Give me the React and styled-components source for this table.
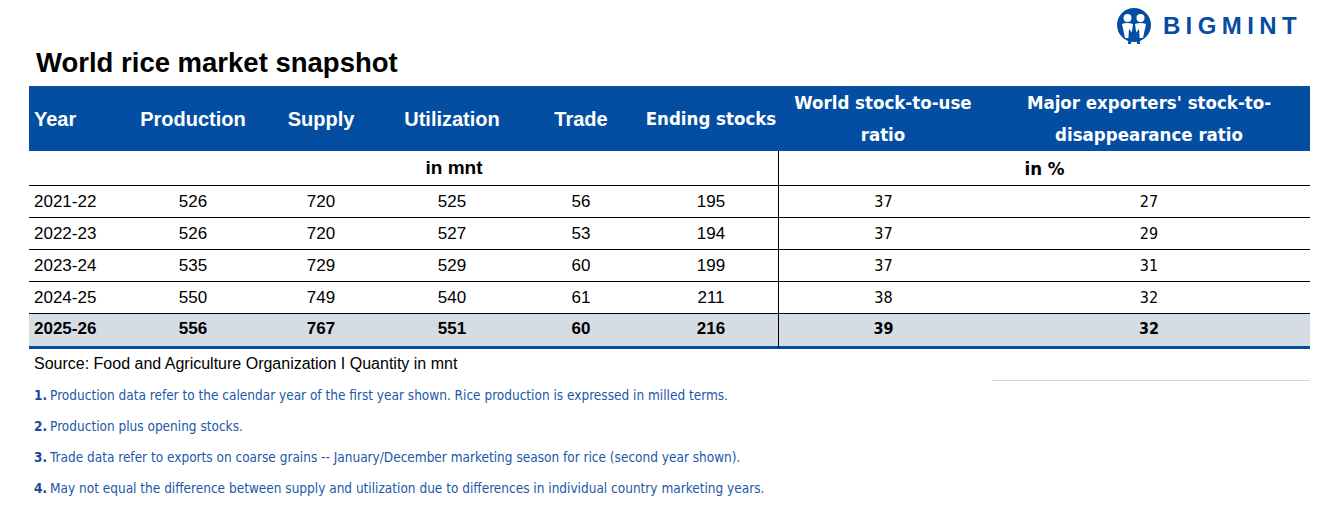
import React from 'react';
import styled, { createGlobalStyle } from 'styled-components';

const BLUE = '#034ea2';
const NARROW = '"DejaVu Sans Condensed", "Liberation Sans", sans-serif';

const GlobalStyle = createGlobalStyle`
  html, body {
    margin: 0;
    padding: 0;
    background: #fff;
    font-family: "Liberation Sans", Arial, sans-serif;
    color: #000;
  }
`;

const Page = styled.div`
  width: 1337px;
  height: 516px;
  padding: 8px 27px 0 29px;
  box-sizing: border-box;
  overflow: hidden;
`;

const TopBar = styled.div`
  display: flex;
  justify-content: space-between;
  align-items: flex-start;
  height: 78px;
`;

const Title = styled.h1`
  margin: 40px 0 0 7px;
  font-size: 27.5px;
  font-weight: 700;
  line-height: 30px;
`;

const Logo = styled.div`
  display: flex;
  align-items: center;
  gap: 11px;
  margin-right: 8px;
`;

const LogoText = styled.span`
  font-size: 24px;
  font-weight: 700;
  color: ${BLUE};
  letter-spacing: 5.4px;
`;

const Table = styled.div`
  display: grid;
  grid-template-columns: 101px 126px 130px 132px 126px 134px 210px 322px;
  width: 1281px;
`;

const HeadCell = styled.div`
  height: 65px;
  background: ${BLUE};
  color: #fff;
  font-weight: 700;
  line-height: 32px;
  display: flex;
  align-items: center;
  justify-content: ${p => (p.$left ? 'flex-start' : 'center')};
  text-align: center;
  white-space: nowrap;
  padding-left: ${p => (p.$left ? '5px' : '0')};
  font-family: ${p => (p.$narrow ? NARROW : 'inherit')};
  font-size: ${p => (p.$narrow ? '18.5px' : '20px')};
`;

const UnitCell = styled.div`
  grid-column: ${p => p.$span};
  height: 34px;
  display: flex;
  align-items: center;
  justify-content: center;
  font-weight: 700;
  font-size: ${p => (p.$narrow ? '18.5px' : '19px')};
  font-family: ${p => (p.$narrow ? NARROW : 'inherit')};
  border-bottom: 1px solid #000;
  border-left: ${p => (p.$divider ? '1px solid #000' : 'none')};
`;

const Cell = styled.div`
  box-sizing: border-box;
  display: flex;
  align-items: center;
  justify-content: ${p => (p.$left ? 'flex-start' : 'center')};
  padding-left: ${p => (p.$left ? '5px' : '0')};
  font-weight: ${p => (p.$bold ? 700 : 400)};
  font-family: ${p => (p.$narrow ? NARROW : 'inherit')};
  font-size: ${p => (p.$narrow ? '16px' : '17px')};
  background: ${p => (p.$bold ? '#d6dce4' : 'transparent')};
  border-bottom: ${p => (p.$bold ? `3px solid ${BLUE}` : '1px solid #000')};
  border-left: ${p => (p.$divider ? '1px solid #000' : 'none')};
  height: ${p => (p.$bold ? '35px' : '32px')};
  padding-bottom: ${p => (p.$bold ? '3px' : '0')};
`;

const Notes = styled.div`
  display: flex;
  flex-direction: column;
`;

const SourceRow = styled.div`
  display: flex;
  justify-content: space-between;
  align-items: flex-end;
  height: 30px;
`;

const Source = styled.div`
  font-size: 16px;
  padding-left: 5px;
  align-self: center;
`;

const Rule = styled.div`
  width: 318px;
  height: 1px;
  margin-bottom: -2px;
  background: #d4d4d4;
`;

const Note = styled.p`
  margin: 0;
  height: 31px;
  display: flex;
  align-items: center;
  padding-left: 5px;
  font-family: ${NARROW};
  font-size: 13.5px;
  color: #2158a8;

  b {
    margin-right: 3px;
    color: #1f4a93;
  }
`;

const LogoMark = () => (
  <svg width="36" height="36" viewBox="0 0 36 36">
    <circle cx="18" cy="17" r="17" fill={BLUE} />
    <circle cx="11.5" cy="10" r="4" fill="#fff" />
    <circle cx="24.5" cy="10" r="4" fill="#fff" />
    <path d="M6 16 Q11 14 17 16 L15 30 L9 30 Z" fill="#fff" />
    <path d="M19 16 Q25 14 30 16 L27 30 L21 30 Z" fill="#fff" />
    <path d="M12 36 L13 21 L18 27 L23 21 L24 36 L21 36 L20.5 28 L18 31 L15.5 28 L15 36 Z" fill={BLUE} />
  </svg>
);

const rows = [
  ['2021-22', '526', '720', '525', '56', '195', '37', '27'],
  ['2022-23', '526', '720', '527', '53', '194', '37', '29'],
  ['2023-24', '535', '729', '529', '60', '199', '37', '31'],
  ['2024-25', '550', '749', '540', '61', '211', '38', '32'],
  ['2025-26', '556', '767', '551', '60', '216', '39', '32'],
];

const notes = [
  'Production data refer to the calendar year of the first year shown. Rice production is expressed in milled terms.',
  'Production plus opening stocks.',
  'Trade data refer to exports on coarse grains -- January/December marketing season for rice (second year shown).',
  'May not equal the difference between supply and utilization due to differences in individual country marketing years.',
];

const App = () => (
  <Page>
    <GlobalStyle />
    <TopBar>
      <Title>World rice market snapshot</Title>
      <Logo>
        <LogoMark />
        <LogoText>BIGMINT</LogoText>
      </Logo>
    </TopBar>

    <Table>
      <HeadCell $left>Year</HeadCell>
      <HeadCell>Production</HeadCell>
      <HeadCell>Supply</HeadCell>
      <HeadCell>Utilization</HeadCell>
      <HeadCell>Trade</HeadCell>
      <HeadCell $narrow>Ending stocks</HeadCell>
      <HeadCell $narrow>World stock-to-use<br />ratio</HeadCell>
      <HeadCell $narrow>Major exporters' stock-to-<br />disappearance ratio</HeadCell>

      <UnitCell $span="1 / 2" />
      <UnitCell $span="2 / 7">in mnt</UnitCell>
      <UnitCell $span="7 / 9" $narrow $divider>in %</UnitCell>

      {rows.map((r, i) => {
        const bold = i === rows.length - 1;
        return r.map((v, j) => (
          <Cell
            key={`${i}-${j}`}
            $left={j === 0}
            $bold={bold}
            $narrow={j >= 6}
            $divider={j === 6}
          >
            {v}
          </Cell>
        ));
      })}
    </Table>

    <Notes>
      <SourceRow>
        <Source>Source: Food and Agriculture Organization I Quantity in mnt</Source>
        <Rule />
      </SourceRow>
      {notes.map((n, i) => (
        <Note key={i}>
          <b>{i + 1}.</b>
          {n}
        </Note>
      ))}
    </Notes>
  </Page>
);

export default App;
